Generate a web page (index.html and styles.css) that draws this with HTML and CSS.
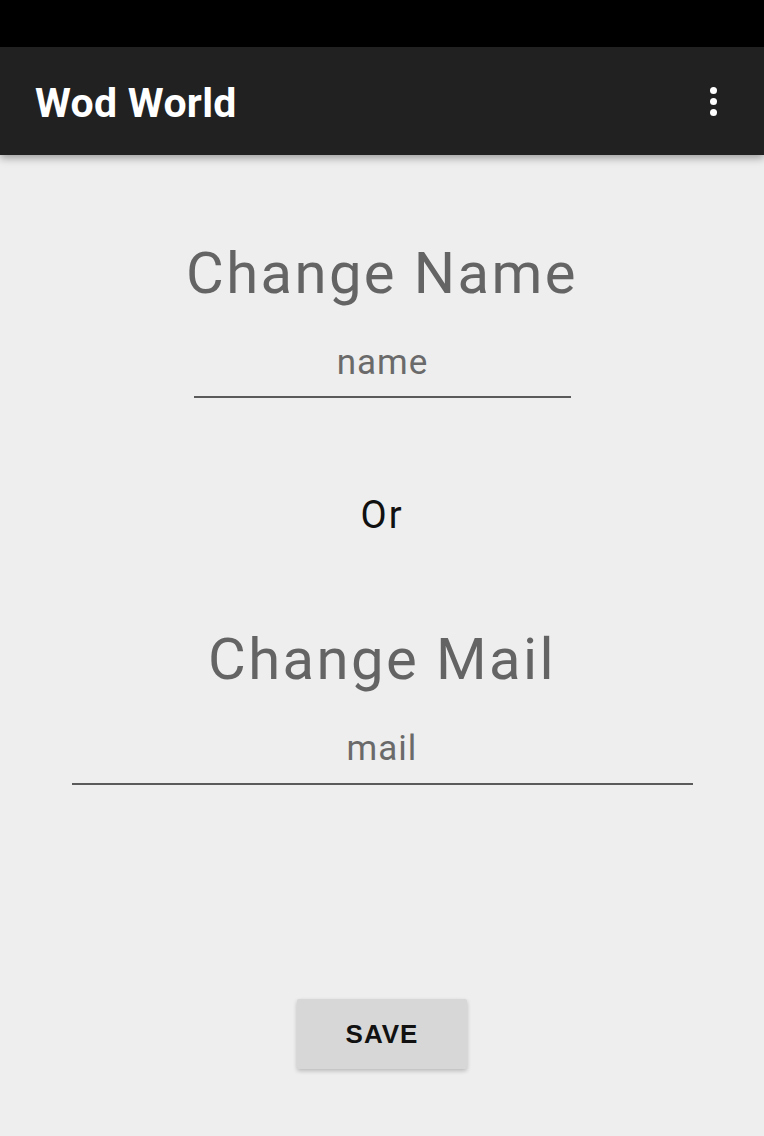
FILE: index.html
```html
<!DOCTYPE html>
<html lang="en">
<head>
<meta charset="utf-8">
<title>Wod World</title>
<link rel="stylesheet" href="styles.css">
</head>
<body>
<div class="status-bar"></div>
<header class="app-bar">
  <span class="app-title">Wod World</span>
  <span class="overflow" aria-label="More options">
    <span class="dot"></span><span class="dot"></span><span class="dot"></span>
  </span>
</header>
<main class="content">
  <h2 class="section-title">Change Name</h2>
  <div class="field field-name"><span class="hint">name</span></div>
  <p class="or">Or</p>
  <h2 class="section-title section-mail">Change Mail</h2>
  <div class="field field-mail"><span class="hint">mail</span></div>
  <button class="save-btn" type="button">SAVE</button>
</main>
</body>
</html>
```

FILE: styles.css
```css
* { box-sizing: border-box; }
html, body { margin: 0; padding: 0; }
body {
  width: 764px;
  height: 1136px;
  overflow: hidden;
  background: #eeeeee;
  font-family: Roboto, "Liberation Sans", sans-serif;
}
.status-bar {
  height: 47px;
  background: #000;
}
.app-bar {
  position: relative;
  z-index: 1;
  height: 108px;
  background: #212121;
  display: flex;
  align-items: center;
  justify-content: space-between;
  padding: 0 47px 0 35px;
  box-shadow: 0 3px 8px rgba(0,0,0,0.35);
}
.app-title {
  color: #fff;
  font-family: Roboto, "Liberation Sans", sans-serif;
  font-weight: 700;
  font-size: 41px;
  line-height: 1;
  letter-spacing: 0.3px;
  margin-top: 4px;
}
.overflow {
  display: flex;
  flex-direction: column;
  gap: 4px;
  margin-top: 0;
}
.dot {
  width: 7px;
  height: 7px;
  border-radius: 50%;
  background: #fff;
}
.content {
  display: flex;
  flex-direction: column;
  align-items: center;
}
.section-title {
  margin: 89px 0 0;
  font-weight: 400;
  font-size: 58px;
  line-height: 58px;
  letter-spacing: 2.4px;
  color: #646464;
}
.section-mail { margin-top: 96px; }
.field {
  display: flex;
  justify-content: center;
  border-bottom: 2px solid #5a5a5a;
  padding-bottom: 16px;
  margin-top: 43px;
}
.field-name { width: 377px; margin-left: 1px; }
.field-mail { width: 621px; padding-bottom: 17px; }
.hint {
  font-size: 35px;
  line-height: 35px;
  color: #6a6a6a;
  letter-spacing: 1px;
}
.or {
  margin: 98px 0 0;
  font-size: 38px;
  line-height: 38px;
  letter-spacing: 2px;
  color: #111;
}
.save-btn {
  margin-top: 214px;
  width: 170px;
  height: 70px;
  border: none;
  border-radius: 2px;
  background: #d7d7d7;
  box-shadow: 0 2px 4px rgba(0,0,0,0.22);
  font-family: "Liberation Sans", Arial, sans-serif;
  font-weight: 700;
  font-size: 26px;
  letter-spacing: 1px;
  color: #111;
  padding: 0;
}
```
